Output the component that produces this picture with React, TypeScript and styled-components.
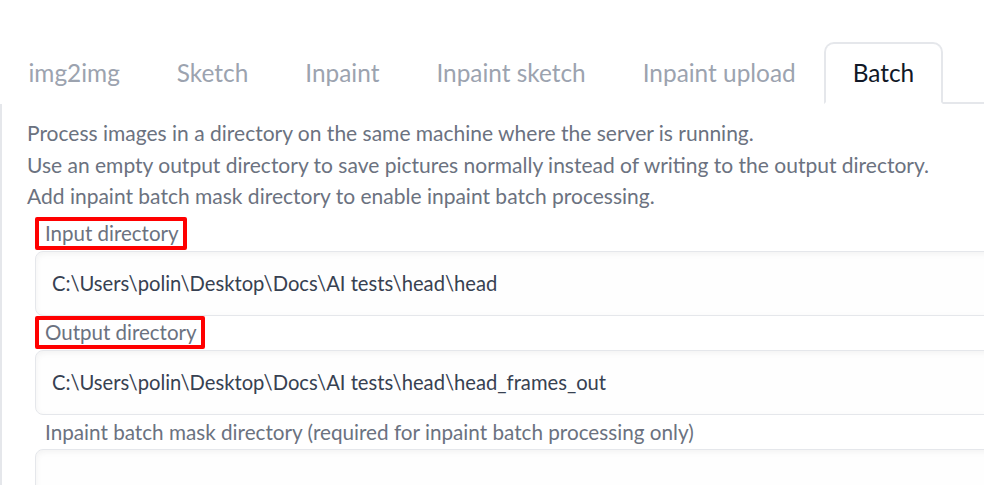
import React from "react";
import styled, { createGlobalStyle } from "styled-components";

const Global = createGlobalStyle`
  html, body { margin: 0; padding: 0; background: #ffffff; overflow: hidden; }
  body { font-family: "Lato", "Noto Sans", sans-serif; }
  * { box-sizing: border-box; }
`;

const Page = styled.div`
  width: 1060px;
  height: 485px;
  overflow: hidden;
`;

const TabBar = styled.div`
  display: flex;
  align-items: flex-end;
  padding-top: 42px;
  border-bottom: 2px solid #e5e7eb;
`;

const Tab = styled.button<{ $active?: boolean }>`
  font-family: inherit;
  font-size: 24.4px;
  height: 62px;
  padding: 0 26.5px 2px;
  margin-bottom: -2px;
  background: #ffffff;
  color: ${(p) => (p.$active ? "#111827" : "#9ca3af")};
  border: 2px solid ${(p) => (p.$active ? "#e5e7eb" : "transparent")};
  border-bottom: 2px solid ${(p) => (p.$active ? "#ffffff" : "transparent")};
  border-radius: 10px 10px 0 0;
  cursor: pointer;
`;

const Panel = styled.div`
  border-left: 2px solid #e5e7eb;
  padding: 13px 0 0 25px;
`;

const Info = styled.p`
  margin: 0;
  font-size: 21px;
  line-height: 31.5px;
  color: #6b7280;
`;

const Fields = styled.div`
  display: flex;
  flex-direction: column;
  padding-top: 5px;
  padding-left: 8px;
`;

const Field = styled.div`
  display: flex;
  flex-direction: column;
`;

const LabelRow = styled.div`
  height: 34px;
  display: flex;
  align-items: flex-start;
`;

const Label = styled.span<{ $marked?: boolean }>`
  display: inline-flex;
  align-items: center;
  height: ${(p) => (p.$marked ? "33px" : "34px")};
  padding: 0 4px 0 6px;
  border: 4px solid ${(p) => (p.$marked ? "#ff0000" : "transparent")};
  border-radius: 2px;
  font-size: ${(p) => (p.$marked ? "20.5px" : "20.7px")};
  color: #6b7280;
  position: relative;
  z-index: 1;
`;

const InputBox = styled.div`
  height: 65px;
  display: flex;
  align-items: center;
  padding: 0 16px;
  background: #fefefe;
  border: 1px solid #e5e7eb;
  border-radius: 8px;
  box-shadow: inset 0 2px 6px rgba(0, 0, 0, 0.05);
  font-size: 20.2px;
  color: #374151;
`;

const tabs = ["img2img", "Sketch", "Inpaint", "Inpaint sketch", "Inpaint upload", "Batch"];

const fields = [
  { label: "Input directory", value: "C:\\Users\\polin\\Desktop\\Docs\\AI tests\\head\\head", marked: true },
  { label: "Output directory", value: "C:\\Users\\polin\\Desktop\\Docs\\AI tests\\head\\head_frames_out", marked: true },
  { label: "Inpaint batch mask directory (required for inpaint batch processing only)", value: "", marked: false },
];

export default function App() {
  return (
    <Page>
      <Global />
      <TabBar>
        {tabs.map((t) => (
          <Tab key={t} $active={t === "Batch"}>
            {t}
          </Tab>
        ))}
      </TabBar>
      <Panel>
        <Info>Process images in a directory on the same machine where the server is running.</Info>
        <Info>Use an empty output directory to save pictures normally instead of writing to the output directory.</Info>
        <Info>Add inpaint batch mask directory to enable inpaint batch processing.</Info>
        <Fields>
          {fields.map((f) => (
            <Field key={f.label}>
              <LabelRow>
                <Label $marked={f.marked}>{f.label}</Label>
              </LabelRow>
              <InputBox>{f.value}</InputBox>
            </Field>
          ))}
        </Fields>
      </Panel>
    </Page>
  );
}
